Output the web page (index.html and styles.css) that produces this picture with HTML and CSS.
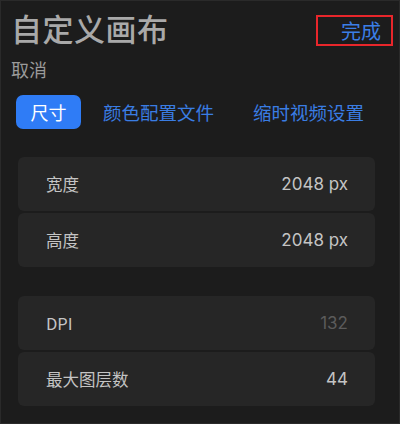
FILE: index.html
```html
<!DOCTYPE html>
<html lang="zh">
<head>
<meta charset="utf-8">
<link rel="stylesheet" href="styles.css">
</head>
<body>
<div class="screen">
  <header class="header">
    <h1 class="title">自定义画布</h1>
    <div class="done-box"><span class="done">完成</span></div>
  </header>
  <div class="cancel">取消</div>
  <nav class="tabs">
    <span class="tab active">尺寸</span>
    <span class="tab">颜色配置文件</span>
    <span class="tab">缩时视频设置</span>
  </nav>
  <section class="group">
    <div class="row"><span class="label">宽度</span><span class="value">2048 px</span></div>
    <div class="row"><span class="label">高度</span><span class="value">2048 px</span></div>
  </section>
  <section class="group group2">
    <div class="row"><span class="label">DPI</span><span class="value dim">132</span></div>
    <div class="row"><span class="label">最大图层数</span><span class="value">44</span></div>
  </section>
</div>
</body>
</html>
```
FILE: styles.css
```css
* { box-sizing: border-box; margin: 0; padding: 0; }
html, body { width: 400px; height: 424px; background: #1c1c1c; overflow: hidden; }
body {
  font-family: "Noto Sans CJK SC", "Liberation Sans", sans-serif;
}
.screen {
  width: 400px;
  height: 424px;
  border: 1px solid #2a2a2a;
  padding: 0 0 0 10px;
  display: flex;
  flex-direction: column;
}
.header {
  display: flex;
  justify-content: space-between;
  align-items: flex-start;
  height: 54px;
  padding-top: 8px;
}
.title {
  font-size: 31px;
  font-weight: 500;
  color: #a9a9a9;
  line-height: 38px;
  letter-spacing: 0.5px;
}
.done-box {
  margin-top: 6px;
  margin-right: 6px;
  width: 77px;
  height: 31px;
  border: 2px solid #e8262b;
  display: flex;
  justify-content: flex-end;
  align-items: center;
  padding-right: 10px;
}
.done {
  font-size: 20px;
  color: #3b7ee6;
  line-height: 24px;
}
.cancel {
  font-size: 18px;
  color: #9a9a9a;
  line-height: 26px;
  margin-top: 1px;
}
.tabs {
  display: flex;
  align-items: center;
  margin-top: 13px;
  padding-left: 5px;
  gap: 22px;
}
.tab {
  font-size: 18.5px;
  color: #3a7de3;
  line-height: 34px;
}
.tab.active {
  background: #2f7cf6;
  color: #fff;
  border-radius: 7px;
  width: 65px;
  text-align: center;
  font-size: 18px;
}
.tab:last-child { margin-left: 17px; }
.group {
  margin-top: 28px;
  margin-left: 7px;
  width: 357px;
  display: flex;
  flex-direction: column;
  gap: 2px;
}
.group2 { margin-top: 29px; }
.row {
  height: 54px;
  background: #262626;
  border-radius: 6px;
  display: flex;
  justify-content: space-between;
  align-items: center;
  padding: 0 27px 0 28px;
}
.label {
  font-size: 16.5px;
  color: #c4c4c4;
}
.value {
  font-family: "Inter", "Liberation Sans", sans-serif;
  font-size: 17px;
  color: #c4c4c4;
}
.value.dim { color: #5b5b5b; }
```
